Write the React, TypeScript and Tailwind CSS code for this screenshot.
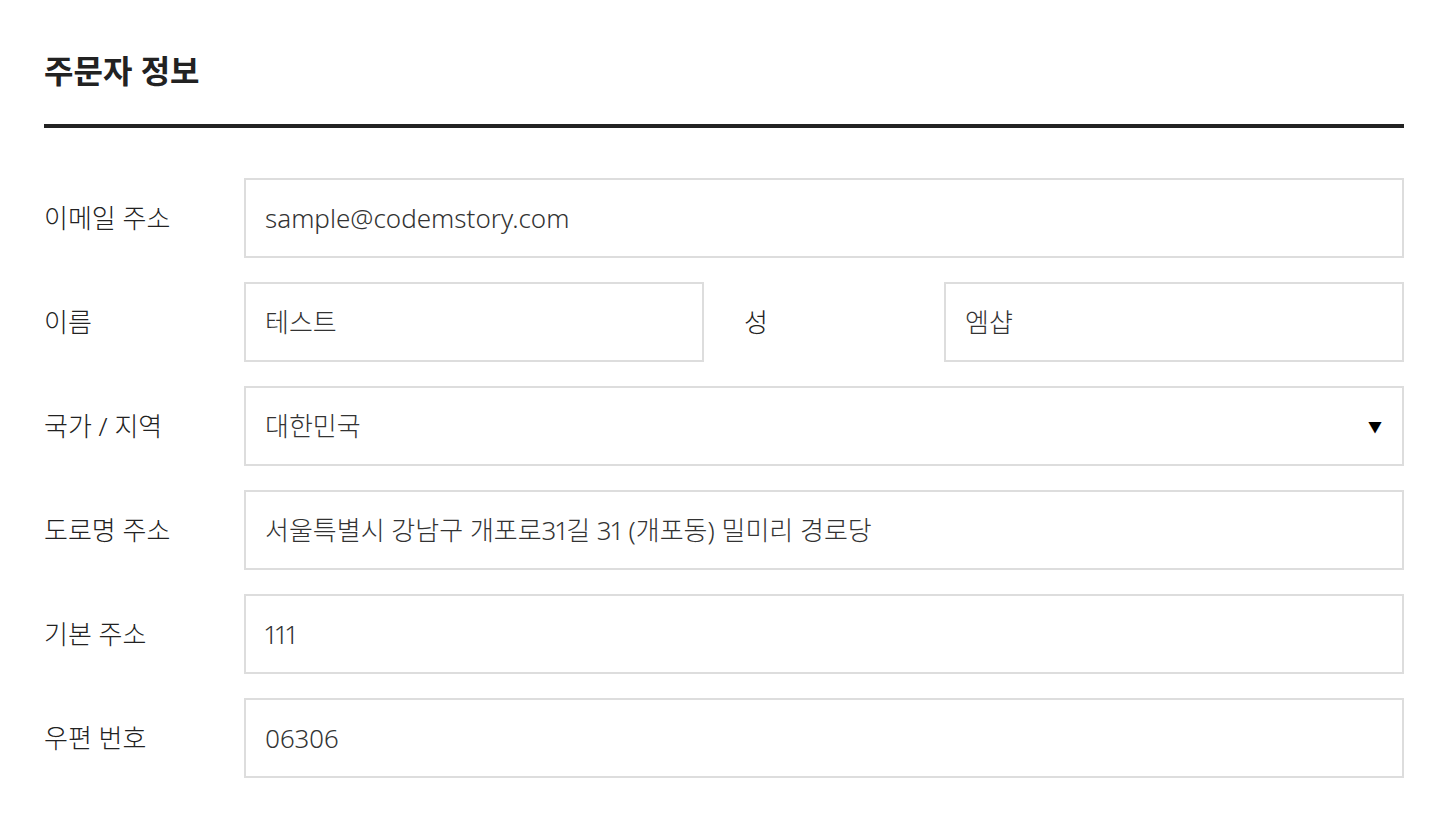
import React from "react";

const font = { fontFamily: '"Noto Sans", "Noto Sans CJK KR", sans-serif' };

function Box({ children, className = "" }: { children: React.ReactNode; className?: string }) {
  return (
    <div className={`flex h-[80px] items-center border-2 border-[#dddddd] bg-white pl-[19px] pr-[20px] text-[26px] font-light text-[#333333] proportional-nums ${className}`}>
      {children}
    </div>
  );
}

function Row({ label, children }: { label: string; children: React.ReactNode }) {
  return (
    <div className="flex items-center">
      <div className="w-[200px] shrink-0 text-[26px] font-light text-[#222222]">{label}</div>
      <div className="flex min-w-0 flex-1">{children}</div>
    </div>
  );
}

export default function App() {
  return (
    <div className="min-h-[828px] w-full bg-white pl-[44px] pr-[46px] pt-[47px]" style={font}>
      <h2 className="text-[32px] font-semibold leading-[48px] text-[#222222]">주문자 정보</h2>
      <div className="mt-[29px] h-[4px] bg-[#222222]" />
      <div className="mt-[50px] flex flex-col gap-[24px]">
        <Row label="이메일 주소">
          <Box className="flex-1">sample@codemstory.com</Box>
        </Row>
        <Row label="이름">
          <Box className="w-[460px]">테스트</Box>
          <div className="flex w-[240px] items-center pl-[40px] text-[26px] font-light text-[#222222]">성</div>
          <Box className="w-[460px]">엠샵</Box>
        </Row>
        <Row label="국가 / 지역">
          <Box className="flex-1 justify-between">
            <span>대한민국</span>
            <span className="text-[14px] text-black">▼</span>
          </Box>
        </Row>
        <Row label="도로명 주소">
          <Box className="flex-1">서울특별시 강남구 개포로31길 31 (개포동) 밀미리 경로당</Box>
        </Row>
        <Row label="기본 주소">
          <Box className="flex-1">111</Box>
        </Row>
        <Row label="우편 번호">
          <Box className="flex-1">06306</Box>
        </Row>
      </div>
    </div>
  );
}
